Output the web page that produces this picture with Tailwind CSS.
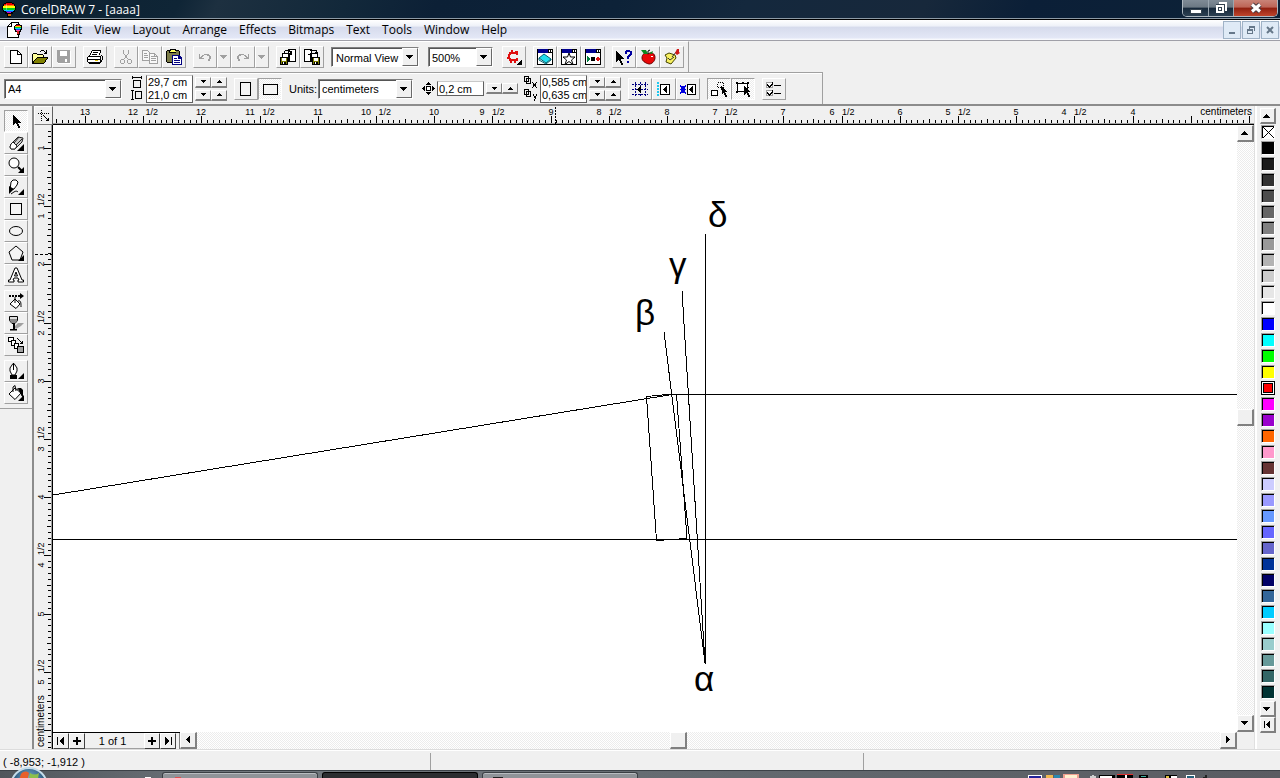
<!DOCTYPE html>
<html lang="en">

<head>
  <meta charset="UTF-8" />
  <title>CorelDRAW 7 - [aaaa]</title>
  <meta name="viewport" content="width=device-width, initial-scale=1.0" />
  <script src="https://cdn.jsdelivr.net/npm/@tailwindcss/browser@4"></script>
</head>

<body class="h-screen flex flex-col overflow-hidden bg-[#f0f0f0] text-black text-[11px] leading-3 font-['Liberation_Sans',sans-serif]">

  <!-- Title bar -->
  <header class="h-5 shrink-0 flex items-start justify-between pl-px pr-[2px] border-b border-black bg-[linear-gradient(115deg,#0c2131_0%,#0f2536_14%,#1d3040_17%,#12283a_27%,#0c2036_34%,#0d2238_48%,#14283d_58%,#17283b_72%,#0b1f37_80%,#0d2237_100%)] shadow-[inset_0_-1px_0_#8d9aa5]">
    <div class="flex items-center gap-1 h-[19px]">
      <svg class="w-4 h-4" viewBox="0 0 16 16" shape-rendering="crispEdges">
        <path d="M5 0h6v1h2v1h1v2h1v4h-1v2h-2v2h-2v3H6v-3H4v-2H2V8H1V4h1V2h1V1h2z" fill="#000" />
        <path d="M5 1h6v1h2v2H3V2h2z" fill="#e00" />
        <path d="M3 3h10v1H3z" fill="#f80" />
        <path d="M2 4h12v2H2z" fill="#ff0" />
        <path d="M2 6h12v2H2z" fill="#0c2" />
        <path d="M3 8h10v1H3z" fill="#0cf" />
        <path d="M5 9h7v1H5z" fill="#24f" />
        <path d="M6 10h4v1H6z" fill="#c0c" />
        <path d="M7 12h3v2H7z" fill="#c60" />
        <path d="M5 2h1v6H5z" fill="#fff" opacity=".35" />
      </svg>
      <h1 class="text-[12px] text-white font-['Open_Sans',sans-serif]">CorelDRAW 7 - [aaaa]</h1>
    </div>
    <div class="flex h-[17px] border border-t-0 border-[#aeb8c0] rounded-b-[5px] overflow-hidden">
      <button aria-label="Minimize" class="w-[26px] flex items-center justify-center border-r border-[#9aa6b0] bg-[linear-gradient(#7f8b96_0,#6c7984_45%,#16283a_50%,#2c4052_100%)]">
        <svg class="w-3 h-3" viewBox="0 0 12 12" shape-rendering="crispEdges"><path d="M0 7h12v5H0z" fill="#34424e" /><path d="M1 8h10v3H1z" fill="#fff" /></svg>
      </button>
      <button aria-label="Restore" class="w-[25px] flex items-center justify-center border-r border-[#9aa6b0] bg-[linear-gradient(#7f8b96_0,#6c7984_45%,#16283a_50%,#2c4052_100%)]">
        <svg class="w-3 h-3" viewBox="0 0 12 12" shape-rendering="crispEdges"><path d="M4 0h8v9H9V3H4z" fill="#fff" /><path d="M1 2h9v9H1z" fill="#34424e" /><path d="M1 3h8v8H1z" fill="#fff" /><path d="M3 5h4v4H3z" fill="#34424e" /><path d="M4 6h2v2H4z" fill="#fff" /></svg>
      </button>
      <button aria-label="Close" class="w-[43px] flex items-center justify-center bg-[linear-gradient(#c98478_0,#bd6456_45%,#8f1f10_50%,#c0452c_100%)]">
        <svg class="w-3 h-3" viewBox="0 0 12 12"><path d="M2 2.500l8 7M10 2.500l-8 7" stroke="#4a3a40" stroke-width="5" /><path d="M2 2.500l8 7M10 2.500l-8 7" stroke="#fff" stroke-width="3" /></svg>
      </button>
    </div>
  </header>

  <!-- Menu bar -->
  <nav class="h-[21px] shrink-0 flex items-center justify-between pl-1.5 pr-px border-b border-[#a0a0a8] bg-[linear-gradient(#fff_0,#eef1f8_30%,#d6dbec_36%,#e3e7f6_88%,#fdfdff_100%)]">
    <div class="flex items-center gap-3 text-[12px] font-['Open_Sans',sans-serif]">
      <svg class="w-4 h-4 -mr-1" viewBox="0 0 16 16" shape-rendering="crispEdges">
        <path d="M5 1h8v14H1V5z" fill="#fff" />
        <path d="M5 0h7v1H5zM4 1h1v1H4zM3 2h1v1H3zM2 3h1v1H2zM1 4h1v11H1zM1 15h12v1H1zM12 0h1v3h-1zM5 1h1v4H2V4h3zM12 13h1v2h-1z" fill="#000" />
        <path d="M10 2h4v1h2v5h-1v2h-1v3h-3v-3h-2V8H8V4h1V3h1z" fill="#000" />
        <path d="M10 3h4v1h-4z" fill="#e00" /><path d="M9 4h6v1H9z" fill="#fc0" /><path d="M9 5h6v1H9z" fill="#0c2" />
        <path d="M9 6h6v1H9z" fill="#0cf" /><path d="M10 7h4v1h-4z" fill="#24f" /><path d="M10 8h4v1h-4z" fill="#f4a" /><path d="M11 9h2v3h-2z" fill="#d22" />
      </svg>
      <a href="#">File</a>
      <a href="#">Edit</a>
      <a href="#">View</a>
      <a href="#">Layout</a>
      <a href="#">Arrange</a>
      <a href="#">Effects</a>
      <a href="#">Bitmaps</a>
      <a href="#">Text</a>
      <a href="#">Tools</a>
      <a href="#">Window</a>
      <a href="#">Help</a>
    </div>
    <div class="flex gap-px">
      <button aria-label="Minimize document" class="w-[18px] h-[18px] flex items-center justify-center border border-[#9fb2c6] bg-[#dfeaf6]">
        <svg class="w-2.5 h-2.5" viewBox="0 0 10 10" shape-rendering="crispEdges"><path d="M2 7h6v2H2z" fill="#66788a" /></svg>
      </button>
      <button aria-label="Restore document" class="w-[18px] h-[18px] flex items-center justify-center border border-[#9fb2c6] bg-[#dfeaf6]">
        <svg class="w-2.5 h-2.5" viewBox="0 0 10 10" shape-rendering="crispEdges"><path d="M3 1h6v5H8V3H4v1H3zM1 4h6v5H1zM2 6v2h4V6z" fill="#66788a" fill-rule="evenodd" /></svg>
      </button>
      <button aria-label="Close document" class="w-[18px] h-[18px] flex items-center justify-center border border-[#9fb2c6] bg-[#dfeaf6]">
        <svg class="w-2.5 h-2.5" viewBox="0 0 10 10"><path d="M2 2l6 6M8 2L2 8" stroke="#66788a" stroke-width="2" /></svg>
      </button>
    </div>
  </nav>

  <!-- Standard toolbar -->
  <div class="h-[31px] w-[689px] shrink-0 flex items-center gap-[7px] pl-1 border-t border-t-white border-r border-r-[#a0a0a0]">
    <div class="flex">
      <button aria-label="New" class="w-6 h-[22px] flex items-center justify-center border border-white border-r-[#a0a0a0] border-b-[#a0a0a0]">
        <svg class="w-4 h-4" viewBox="0 0 16 16" shape-rendering="crispEdges"><path d="M3 2h7v1h1v1h1v1h1v9H3z" fill="#fff" /><path d="M2 1h8v1H2zM2 2h1v12H2zM2 14h12v1H2zM13 5h1v9h-1zM9 2h1v3h3v1H9zM10 2h1v1h-1zM11 3h1v1h-1zM12 4h1v1h-1z" /></svg>
      </button>
      <button aria-label="Open" class="w-6 h-[22px] flex items-center justify-center border border-white border-r-[#a0a0a0] border-b-[#a0a0a0]">
        <svg class="w-4 h-4" viewBox="0 0 16 16" shape-rendering="crispEdges"><path d="M1 5h4v1h6v3H5l-4 5z" fill="#ffff9c" /><path d="M5 9h11l-4 5H1z" fill="#808000" /><path d="M1 4h4v1H1zM0 5h1v9H0zM5 5h6v1H5zM11 6h1v2h-1zM5 8h11v1H5zM4 9h1v1H4zM3 10h1v1H3zM2 11h1v1H2zM1 12h1v2H1zM0 14h12v1H0zM15 9h1v1h-1zM14 10h1v1h-1zM13 11h1v2h-1zM12 13h1v1h-1zM8 2h1v1H8zM9 1h3v1H9zM12 2h1v1h-1zM13 3h1v1h-1zM14 1h1v4h-3V4h2z" /></svg>
      </button>
      <button aria-label="Save" class="w-6 h-[22px] flex items-center justify-center border border-white border-r-[#a0a0a0] border-b-[#a0a0a0]">
        <svg class="w-4 h-4" viewBox="0 0 16 16" shape-rendering="crispEdges"><path d="M2 2h13v13H2z" fill="#fff" /><path d="M1 1h13v13H2v-1H1zM4 2v5h7V2zM9 10v3h2v-3z" fill="#a0a0a0" fill-rule="evenodd" /></svg>
      </button>
    </div>
    <button aria-label="Print" class="w-6 h-[22px] flex items-center justify-center border border-white border-r-[#a0a0a0] border-b-[#a0a0a0]">
      <svg class="w-4 h-4" viewBox="0 0 16 16" shape-rendering="crispEdges"><path d="M5 1h9l-3 6H3z" fill="#fff" /><path d="M1 8h13v6H1z" fill="#fff" /><path d="M5 1h9v1H5zM4 2h1v2H4zM13 2h1v2h-1zM3 4h1v2H3zM12 4h1v2h-1zM6 3h5v1H6zM5 5h5v1H5zM1 7h13v1H1zM0 8h1v5H0zM1 10h12v1H1zM13 8h1v5h-1zM14 6h1v1h-1zM15 7h1v4h-1zM14 11h1v2h-1zM1 13h13v1H1zM2 15h11v-1H2zM2 6h1v1H2z" /><path d="M8 11h3v1H8z" fill="#e0c000" /></svg>
    </button>
    <div class="flex">
      <button aria-label="Cut" class="w-6 h-[22px] flex items-center justify-center border border-white border-r-[#a0a0a0] border-b-[#a0a0a0]">
        <svg class="w-4 h-4" viewBox="0 0 16 16" fill="none" stroke="#a0a0a0" shape-rendering="crispEdges"><path d="M5.500 1v3l5 7M10.500 1v3l-5 7" /><circle cx="4.500" cy="12.500" r="2" /><circle cx="11.500" cy="12.500" r="2" /></svg>
      </button>
      <button aria-label="Copy" class="w-6 h-[22px] flex items-center justify-center border border-white border-r-[#a0a0a0] border-b-[#a0a0a0]">
        <svg class="w-4 h-4" viewBox="0 0 16 16" fill="#f8f8f8" stroke="#a0a0a0" shape-rendering="crispEdges"><path d="M.500 1.500h5l3 3v7h-8zM2 4.500h3M2 6.500h4M2 8.500h4" /><path d="M7.500 4.500h5l3 3v7h-8zM9 7.500h3M9 9.500h5M9 11.500h5M12.500 5v2.500h3" /></svg>
      </button>
      <button aria-label="Paste" class="w-6 h-[22px] flex items-center justify-center border border-white border-r-[#a0a0a0] border-b-[#a0a0a0]">
        <svg class="w-4 h-4" viewBox="0 0 16 16" shape-rendering="crispEdges"><path d="M1 1h12v1h1v12H1v-1H0V2h1z" /><path d="M1 2h12v11H1z" fill="#7c7c48" /><path d="M4 0h6v4H3V2h1z" /><path d="M5 1h4v1h1v1H4V2h1z" fill="#ffff60" /><path d="M6 6h7l3 3v7H6z" fill="#000080" /><path d="M7 7h5v3h3v5H7z" fill="#fff" /><path d="M8 9h3v1H8zM8 11h6v1H8zM8 13h6v1H8z" fill="#000080" /></svg>
      </button>
    </div>
    <div class="flex">
      <button aria-label="Undo" class="w-6 h-[22px] flex items-center justify-center border border-white border-r-[#a0a0a0] border-b-[#a0a0a0]">
        <svg class="w-4 h-4" viewBox="0 0 16 16" shape-rendering="crispEdges"><path d="M2 5v5h5V9H5V8h1V7h1V6h3v1h2v3h-1v2h2v-2h1V7h-1V6h-1V5H7v1H5v1H4v1H3V5z" fill="#a0a0a0" /></svg>
      </button>
      <button aria-label="Undo list" class="w-[14px] h-[22px] flex items-center justify-center border border-white border-r-[#a0a0a0] border-b-[#a0a0a0]">
        <svg class="w-2 h-1" viewBox="0 0 8 4" shape-rendering="crispEdges"><path d="M0 0h7v1H6v1H5v1H4v1H3V3H2V2H1V1H0z" fill="#a0a0a0" /></svg>
      </button>
      <button aria-label="Redo" class="w-6 h-[22px] flex items-center justify-center border border-white border-r-[#a0a0a0] border-b-[#a0a0a0]">
        <svg class="w-4 h-4" viewBox="0 0 16 16" shape-rendering="crispEdges"><path d="M14 5v5H9V9h2V8h-1V7H9V6H6v1H4v3h1v2H3v-2H2V7h1V6h1V5h5v1h2v1h1v1h1V5z" fill="#a0a0a0" /></svg>
      </button>
      <button aria-label="Redo list" class="w-[14px] h-[22px] flex items-center justify-center border border-white border-r-[#a0a0a0] border-b-[#a0a0a0]">
        <svg class="w-2 h-1" viewBox="0 0 8 4" shape-rendering="crispEdges"><path d="M0 0h7v1H6v1H5v1H4v1H3V3H2V2H1V1H0z" fill="#a0a0a0" /></svg>
      </button>
    </div>
    <div class="flex">
      <button aria-label="Import" class="w-6 h-[22px] flex items-center justify-center border border-white border-r-[#a0a0a0] border-b-[#a0a0a0]">
        <svg class="w-4 h-4" viewBox="0 0 16 16" shape-rendering="crispEdges"><path d="M8.500.500h7v12h-7zM2.500 4.500h7v7h-7z" fill="#fff" stroke="#000" /><path d="M5 1h5v1H5zM4 2h1v3H4zM9 2h3v1H9zM10 3h2v3h-2zM8 5h2v1H8z" /><path d="M0 8h8v8H0z" /><path d="M1 9h6v6H1z" fill="#808000" /><path d="M2 9h4v3H2z" fill="#fff" /><path d="M2 13h4v3H2z" /><path d="M3 13h1v2H3z" fill="#fff" /></svg>
      </button>
      <button aria-label="Export" class="w-6 h-[22px] flex items-center justify-center border border-white border-r-[#a0a0a0] border-b-[#a0a0a0]">
        <svg class="w-4 h-4" viewBox="0 0 16 16" shape-rendering="crispEdges"><path d="M.500.500h7v12h-7zM6.500 4.500h7v7h-7z" fill="#fff" stroke="#000" /><path d="M6 1h7v1H6zM12 2h1v3h-1zM11 3h3v1h-3zM4 5h3v1H4z" /><path d="M8 8h8v8H8z" /><path d="M9 9h6v6H9z" fill="#808000" /><path d="M10 9h4v3h-4z" fill="#fff" /><path d="M10 13h4v3h-4z" /><path d="M11 13h1v2h-1z" fill="#fff" /></svg>
      </button>
    </div>
    <div class="flex w-[88px] h-5 mr-[2px] border border-[#808080] border-r-white border-b-white bg-white">
      <select aria-label="View quality" class="appearance-none min-w-0 grow pl-[3px] bg-white border-t border-l border-[#555]">
        <option>Normal View</option>
      </select>
      <span class="w-4 shrink-0 flex items-center justify-center border border-white border-r-[#696969] border-b-[#696969] bg-[#f0f0f0]">
        <svg class="w-2 h-1" viewBox="0 0 8 4" shape-rendering="crispEdges"><path d="M0 0h7v1H6v1H5v1H4v1H3V3H2V2H1V1H0z" /></svg>
      </span>
    </div>
    <div class="flex w-[65px] h-5 mr-[2px] border border-[#808080] border-r-white border-b-white bg-white">
      <select aria-label="Zoom level" class="appearance-none min-w-0 grow pl-[2px] bg-white border-t border-l border-[#555]">
        <option>500%</option>
      </select>
      <span class="w-4 shrink-0 flex items-center justify-center border border-white border-r-[#696969] border-b-[#696969] bg-[#f0f0f0]">
        <svg class="w-2 h-1" viewBox="0 0 8 4" shape-rendering="crispEdges"><path d="M0 0h7v1H6v1H5v1H4v1H3V3H2V2H1V1H0z" /></svg>
      </span>
    </div>
    <button aria-label="Application launcher" class="w-6 h-[22px] flex items-center justify-center border border-white border-r-[#a0a0a0] border-b-[#a0a0a0]">
      <svg class="w-4 h-4" viewBox="0 0 16 16" shape-rendering="crispEdges"><path d="M5 1h2v2h2V2h3v4h-2V5H5v1H4v3h1v1h5V9h2v3h-2v2H8v-2H6v2H4v-2H3v-2H1V8h1V5h1V3h2z" fill="#e01010" /><path d="M15 11h1v5h-5v-1h1v-1h1v-1h1v-1h1z" /></svg>
    </button>
    <div class="flex">
      <button aria-label="Scrapbook" class="w-6 h-[22px] flex items-center justify-center border border-white border-r-[#a0a0a0] border-b-[#a0a0a0]">
        <svg class="w-4 h-4" viewBox="0 0 16 16"><path d="M.500.500h15v15h-15z" fill="#fff" stroke="#000" shape-rendering="crispEdges" /><path d="M1 0h10v4H1z" fill="#000090" shape-rendering="crispEdges" /><path d="M11 0h5v4h-5z" /><path d="M12 1h1v2h-1zM14 1h1v2h-1z" fill="#fff" /><path d="M2 9l5-4 7 5-5 4z" fill="#20e0f0" stroke="#006070" /><path d="M2 9v2l7 4 5-4v-1" fill="none" stroke="#006070" /></svg>
      </button>
      <button aria-label="Symbols" class="w-6 h-[22px] flex items-center justify-center border border-white border-r-[#a0a0a0] border-b-[#a0a0a0]">
        <svg class="w-4 h-4" viewBox="0 0 16 16"><path d="M.500.500h15v15h-15z" fill="#fff" stroke="#000" shape-rendering="crispEdges" /><path d="M1 0h10v4H1z" fill="#000090" shape-rendering="crispEdges" /><path d="M11 0h5v4h-5z" /><path d="M12 1h1v2h-1zM14 1h1v2h-1z" fill="#fff" /><path d="M8 4l1.500 4H14l-3.500 3 1.500 4.500-4-3-4 3L5.500 11 2 8h4.500z" fill="#fff" stroke="#000" /></svg>
      </button>
      <button aria-label="Script and preset manager" class="w-6 h-[22px] flex items-center justify-center border border-white border-r-[#a0a0a0] border-b-[#a0a0a0]">
        <svg class="w-4 h-4" viewBox="0 0 16 16" shape-rendering="crispEdges"><path d="M.500.500h15v15h-15z" fill="#fff" stroke="#000" /><path d="M1 0h10v4H1z" fill="#000090" /><path d="M11 0h5v4h-5z" /><path d="M12 1h1v2h-1zM14 1h1v2h-1z" fill="#fff" /><path d="M2 7h1v1h1v1h1v2H4v1H3v1H2z" fill="#008040" /><path d="M6 8h4v4H6z" /><path d="M12 8h2v1h1v2h-1v1h-2v-1h-1V9h1z" fill="#e01010" /></svg>
      </button>
    </div>
    <div class="flex">
      <button aria-label="What's this?" class="w-6 h-[22px] flex items-center justify-center border border-white border-r-[#a0a0a0] border-b-[#a0a0a0]">
        <svg class="w-4 h-4" viewBox="0 0 16 16" shape-rendering="crispEdges"><path d="M0 2h1v1h1v1h1v1h1v1h1v1h1v1h1v1h1v1H5v2h1v2h1v2H5v-2H4v-2H3v-1H2v1H1v1H0z" /><path d="M9 2h1V1h4v1h2v4h-1v1h-1v1h-1v2h-2V7h1V6h1V5h1V3h-3v2H9zM11 12h2v2h-2z" fill="#0000a0" /></svg>
      </button>
      <button aria-label="Corel tutor" class="w-6 h-[22px] flex items-center justify-center border border-white border-r-[#a0a0a0] border-b-[#a0a0a0]">
        <svg class="w-4 h-4" viewBox="0 0 16 16"><path d="M8 5c3-2 7-1 7 3.500S11 15 9.500 15 2 13 2 9s3-6 6-4z" fill="#e80808" stroke="#600" /><path d="M8 5V2l2-1" fill="none" stroke="#000" /><path d="M1 1l5 0 2 4-4 0z" fill="#0a8a20" /><path d="M9 4l4-2-1 3z" fill="#0a8a20" /><path d="M11 7h2v1h-2z" fill="#fff" /></svg>
      </button>
      <button aria-label="Notes" class="w-6 h-[22px] flex items-center justify-center border border-white border-r-[#a0a0a0] border-b-[#a0a0a0]">
        <svg class="w-4 h-4" viewBox="0 0 16 16"><path d="M1 6l4-2 6 2 1 3-5 6-5-2 1-4z" fill="#f8f060" stroke="#444400" /><path d="M4 9l2 2 4-3" fill="none" stroke="#333" /><path d="M8 8l5-6" stroke="#333" /><path d="M13 0h2v3l1 1-3 2-2-2z" fill="#d01818" /></svg>
      </button>
    </div>
  </div>

  <!-- Property bar -->
  <div class="h-8 w-[823px] shrink-0 flex items-center pl-1 border-t border-t-[#a0a0a0] border-r border-r-[#a0a0a0] shadow-[inset_0_1px_0_#fff]">
    <div class="flex w-[118px] h-5 border border-[#808080] border-r-white border-b-white bg-white">
      <select aria-label="Paper type" class="appearance-none min-w-0 grow pl-[2px] bg-white border-t border-l border-[#555]">
        <option>A4</option>
      </select>
      <span class="w-4 shrink-0 flex items-center justify-center border border-white border-r-[#696969] border-b-[#696969] bg-[#f0f0f0]">
        <svg class="w-2 h-1" viewBox="0 0 8 4" shape-rendering="crispEdges"><path d="M0 0h7v1H6v1H5v1H4v1H3V3H2V2H1V1H0z" /></svg>
      </span>
    </div>
    <div class="flex flex-col gap-px ml-[9px] mr-[3px]">
      <svg class="w-3 h-3" viewBox="0 0 12 12" shape-rendering="crispEdges" fill="none" stroke="#000"><path d="M1 1.500h10M1.500 0v3M10.500 0v3M2.500 4.500h7v7h-7z" /></svg>
      <svg class="w-3 h-3" viewBox="0 0 12 12" shape-rendering="crispEdges" fill="none" stroke="#000"><path d="M1.500 1v10M0 1.500h3M0 10.500h3M4.500 2.500h6v7h-6z" /></svg>
    </div>
    <div class="flex flex-col w-[47px] border border-[#606060] border-t-[#c8c8c8] bg-white">
      <input aria-label="Paper width" value="29,7 cm" class="w-full h-[13px] pl-px" />
      <input aria-label="Paper height" value="21,0 cm" class="w-full h-[13px] pl-px" />
    </div>
    <div class="flex flex-col gap-[2px] ml-[2px] mr-[7px]" data-spin="2"></div>
    <div class="flex">
      <button aria-label="Portrait" class="w-6 h-[22px] flex items-center justify-center border border-white border-r-[#a0a0a0] border-b-[#a0a0a0]">
        <svg class="w-4 h-4" viewBox="0 0 16 16" shape-rendering="crispEdges"><path d="M2 1h11v14H2z" /><path d="M3 2h9v12H3z" fill="#f4f4f4" /></svg>
      </button>
      <button aria-label="Landscape" aria-pressed="true" class="w-6 h-[22px] flex items-center justify-center border border-[#a0a0a0] border-r-white border-b-white bg-[repeating-conic-gradient(#fff_0_25%,#ececec_0_50%)] bg-[length:2px_2px]">
        <svg class="w-4 h-4" viewBox="0 0 16 16" shape-rendering="crispEdges"><path d="M1 3h15v11H1z" /><path d="M2 4h13v9H2z" fill="#f4f4f4" /></svg>
      </button>
    </div>
    <label for="units" class="w-9 pl-[7px]">Units:</label>
    <div class="flex w-[95px] h-5 border border-[#808080] border-r-white border-b-white bg-white">
      <select id="units" class="appearance-none min-w-0 grow pl-[2px] bg-white border-t border-l border-[#555]">
        <option>centimeters</option>
      </select>
      <span class="w-4 shrink-0 flex items-center justify-center border border-white border-r-[#696969] border-b-[#696969] bg-[#f0f0f0]">
        <svg class="w-2 h-1" viewBox="0 0 8 4" shape-rendering="crispEdges"><path d="M0 0h7v1H6v1H5v1H4v1H3V3H2V2H1V1H0z" /></svg>
      </span>
    </div>
    <svg class="w-[13px] h-[13px] ml-[9px] mr-[2px]" viewBox="0 0 13 13" shape-rendering="crispEdges"><path d="M6 0h1v1h1v1h1v1H4V2h1V1h1zM6 13h1v-1h1v-1h1v-1H4v1h1v1h1zM0 6h1V5h1V4h1v5H2V8H1V7H0zM13 6h-1V5h-1V4h-1v5h1V8h1V7h1z" /><path d="M4.500 4.500h4v4h-4z" fill="#fff" stroke="#000" /></svg>
    <input aria-label="Nudge offset" value="0,2 cm" class="w-[47px] h-[15px] pl-px border border-[#606060] border-t-[#c8c8c8] bg-white" />
    <div class="flex flex-col ml-[2px] mr-[6px]" data-spin="1"></div>
    <div class="flex flex-col gap-px mr-[2px]">
      <svg class="w-[14px] h-3" viewBox="0 0 14 12" shape-rendering="crispEdges" fill="none" stroke="#000"><path d="M.500.500h4v5h-4zM2.500 2.500h4v5h-4z" /><path d="M8 6l5 6M13 6l-5 6" /></svg>
      <svg class="w-[14px] h-3" viewBox="0 0 14 12" shape-rendering="crispEdges" fill="none" stroke="#000"><path d="M.500.500h4v5h-4zM2.500 2.500h4v5h-4z" /><path d="M9 5l2 4M13 5l-3 7H8" /></svg>
    </div>
    <div class="flex flex-col w-[47px] border border-[#606060] border-t-[#c8c8c8] bg-white">
      <input aria-label="Duplicate distance x" value="0,585 cm" class="w-full h-[13px] pl-px" />
      <input aria-label="Duplicate distance y" value="0,635 cm" class="w-full h-[13px] pl-px" />
    </div>
    <div class="flex flex-col gap-[2px] ml-[2px] mr-[7px]" data-spin="2"></div>
    <div class="flex mr-[7px]">
      <button aria-label="Snap to grid" class="w-6 h-[22px] flex items-center justify-center border border-white border-r-[#a0a0a0] border-b-[#a0a0a0]">
        <svg class="w-4 h-4" viewBox="0 0 16 16" shape-rendering="crispEdges"><path d="M3.500 1v15M8.500 1v15M13.500 1v15M0 3.500h16M0 8.500h16M0 13.500h16" stroke="#000080" stroke-dasharray="2 1" /><path d="M9 5v7H8v-1H7v-1H6V9H5V8h1V7h1V6h1V5z" /></svg>
      </button>
      <button aria-label="Snap to guidelines" class="w-6 h-[22px] flex items-center justify-center border border-white border-r-[#a0a0a0] border-b-[#a0a0a0]">
        <svg class="w-4 h-4" viewBox="0 0 16 16" shape-rendering="crispEdges"><path d="M1 1h2v14H1z" fill="#20c8f0" /><path d="M1 3h2v1H1zM1 6h2v1H1zM1 9h2v1H1zM1 12h2v1H1z" fill="#f0f0f0" /><path d="M4 3h10v11H4z" /><path d="M5 4h8v9H5z" fill="#fff" /><path d="M11 5v7h-1v-1H9v-1H8V9H7V8h1V7h1V6h1V5z" /></svg>
      </button>
      <button aria-label="Snap to objects" class="w-6 h-[22px] flex items-center justify-center border border-white border-r-[#a0a0a0] border-b-[#a0a0a0]">
        <svg class="w-4 h-4" viewBox="0 0 16 16" shape-rendering="crispEdges"><path d="M1 5h4v7H1z" fill="#0000e0" /><path d="M0 4h1v2H0zM5 4h1v2H5zM0 11h1v2H0zM5 11h1v2H5zM0 8h6v1H0z" fill="#0000e0" /><path d="M7 3h9v11H7z" /><path d="M8 4h7v9H8z" fill="#fff" /><path d="M13 5v7h-1v-1h-1v-1h-1V9H9V8h1V7h1V6h1V5z" /></svg>
      </button>
    </div>
    <div class="flex mr-[7px]">
      <button aria-label="Draw complex objects" aria-pressed="true" class="w-6 h-[22px] flex items-center justify-center border border-[#a0a0a0] border-r-white border-b-white bg-[repeating-conic-gradient(#fff_0_25%,#ececec_0_50%)] bg-[length:2px_2px]">
        <svg class="w-4 h-4" viewBox="0 0 16 16" shape-rendering="crispEdges"><path d="M6.500 1.500h6v5h-6z" fill="none" stroke="#000" stroke-dasharray="1 1" /><path d="M.500 9.500h6v5h-6z" fill="#fff" stroke="#000" /><path d="M10 5h1v1h1v1h1v1h1v1h1v1h1v1h-2v1h1v2h1v2h-2v-2h-1v-2h-1v1h-1z" /></svg>
      </button>
      <button aria-label="Treat all as filled" aria-pressed="true" class="w-6 h-[22px] flex items-center justify-center border border-[#a0a0a0] border-r-white border-b-white bg-[repeating-conic-gradient(#fff_0_25%,#ececec_0_50%)] bg-[length:2px_2px]">
        <svg class="w-4 h-4" viewBox="0 0 16 16" shape-rendering="crispEdges"><path d="M2.500 2.500h10v8h-10z" fill="#fff" stroke="#000" /><path d="M1 1h2v2H1zM7 1h2v2H7zM12 1h2v2h-2zM1 10h2v2H1zM12 6h2v1h-2z" /><path d="M9 5h1v1h1v1h1v1h1v1h1v1h1v1h-2v1h1v2h1v2h-2v-2h-1v-2h-1v1h-1v1H9z" /></svg>
      </button>
    </div>
    <button aria-label="Options" class="w-6 h-[22px] flex items-center justify-center border border-white border-r-[#a0a0a0] border-b-[#a0a0a0]">
      <svg class="w-4 h-4" viewBox="0 0 16 16" shape-rendering="crispEdges"><path d="M.500 1.500h6v5h-6zM.500 9.500h6v5h-6z" fill="#fff" stroke="#a0a0a0" /><path d="M8 4h7v1H8zM8 12h7v1H8zM1 3h1v1h1v1h1V4h1V3h1V1h1v3H6v1H5v1H4v1H3V6H2V5H1zM1 11h1v1h1v1h1v-1h1v-1h1V9h1v3H6v1H5v1H4v1H3v-1H2v-1H1z" /></svg>
    </button>
  </div>

  <!-- Toolbox, document and palette -->
  <main class="grow min-h-0 flex border-t-2 border-[#8c8c8c]">
    <aside class="w-[34px] shrink-0 border-r-2 border-[#8c8c8c]">
      <div class="flex flex-col gap-1 pl-1 py-1 border-b border-[#a0a0a0]">
        <div class="flex flex-col">
          <button aria-label="Pick" aria-pressed="true" class="w-6 h-[22px] flex items-center justify-center border border-[#a0a0a0] border-r-white border-b-white bg-[repeating-conic-gradient(#fff_0_25%,#ececec_0_50%)] bg-[length:2px_2px]">
            <svg class="w-4 h-4" viewBox="0 0 16 16" shape-rendering="crispEdges"><path d="M5 2h1v1h1v1h1v1h1v1h1v1h1v1h1v1h1v1h-3v1h1v2h1v2h-2v-2H9v-2H8v-1H7v1H6v1H5z" /></svg>
          </button>
          <button aria-label="Shape" class="w-6 h-[22px] flex items-center justify-center border border-white border-r-[#a0a0a0] border-b-[#a0a0a0]">
            <svg class="w-4 h-4" viewBox="0 0 16 16"><path d="M3 9l7-7 5 1-1 4-7 7-4 0-1-2z" fill="#ccc" stroke="#222" /><path d="M5 7l4 4M11 2L6 8M14 4L8 10" stroke="#222" /><path d="M3 9l2-2 4 4-2 3-4 0-1-2z" fill="#fff" stroke="#222" /><path d="M16 9v7H9z" /></svg>
          </button>
          <button aria-label="Zoom" class="w-6 h-[22px] flex items-center justify-center border border-white border-r-[#a0a0a0] border-b-[#a0a0a0]">
            <svg class="w-4 h-4" viewBox="0 0 16 16"><circle cx="6" cy="6" r="5" fill="#fff" stroke="#000" /><path d="M10 10l4 4" stroke="#000" stroke-width="2" /><path d="M16 10v6h-6z" /></svg>
          </button>
          <button aria-label="Freehand" class="w-6 h-[22px] flex items-center justify-center border border-white border-r-[#a0a0a0] border-b-[#a0a0a0]">
            <svg class="w-4 h-4" viewBox="0 0 16 16"><path d="M3 3l2-2h3l2 2-1 3-3 4-4 1z" fill="#fff" stroke="#000" /><path d="M1 7l5 3-5 5z" /><path d="M3 15c3-2 5-4 7-2" fill="none" stroke="#000" /><path d="M16 10v6h-6z" /></svg>
          </button>
          <button aria-label="Rectangle" class="w-6 h-[22px] flex items-center justify-center border border-white border-r-[#a0a0a0] border-b-[#a0a0a0]">
            <svg class="w-4 h-4" viewBox="0 0 16 16" shape-rendering="crispEdges"><path d="M2.500 2.500h11v11h-11z" fill="#f4f4f4" stroke="#000" /></svg>
          </button>
          <button aria-label="Ellipse" class="w-6 h-[22px] flex items-center justify-center border border-white border-r-[#a0a0a0] border-b-[#a0a0a0]">
            <svg class="w-4 h-4" viewBox="0 0 16 16"><ellipse cx="8" cy="8" rx="6.500" ry="4.500" fill="#f4f4f4" stroke="#000" /></svg>
          </button>
          <button aria-label="Polygon" class="w-6 h-[22px] flex items-center justify-center border border-white border-r-[#a0a0a0] border-b-[#a0a0a0]">
            <svg class="w-4 h-4" viewBox="0 0 16 16"><path d="M8 1l7 6-3 8H4L1 7z" fill="#f4f4f4" stroke="#000" /><path d="M16 10v6h-6z" /></svg>
          </button>
          <button aria-label="Text" class="w-6 h-[22px] flex items-center justify-center border border-white border-r-[#a0a0a0] border-b-[#a0a0a0]">
            <svg class="w-4 h-4" viewBox="0 0 16 16"><path d="M7 1h2l5 12h1.500v2H10v-2h1l-1-2H6l-1 2h1v2H.500v-2H2zM8 5L6.500 9h3z" fill="#fff" stroke="#000" fill-rule="evenodd" /></svg>
          </button>
        </div>
        <div class="flex flex-col">
          <button aria-label="Interactive fill" class="w-6 h-[22px] flex items-center justify-center border border-white border-r-[#a0a0a0] border-b-[#a0a0a0]">
            <svg class="w-4 h-4" viewBox="0 0 16 16"><path d="M1 2h2v2H1zM4 2h2v2H4zM7 2h2v2H7zM10 2h2v2h-2zM12 0l4 3-4 3z" /><path d="M2 11l5-5 5 5-4 4.500z" fill="#fff" stroke="#000" /><path d="M7 4v6M10 8c3-1 3 2 3 6" fill="none" stroke="#000" stroke-width="1" /></svg>
          </button>
          <button aria-label="Interactive transparency" class="w-6 h-[22px] flex items-center justify-center border border-white border-r-[#a0a0a0] border-b-[#a0a0a0]">
            <svg class="w-4 h-4" viewBox="0 0 16 16"><path d="M6 12l4-4h6l-3 3-5 3z" fill="#a0a0a0" /><path d="M1.500 1.500h8v4L7 8.500H4L1.500 5.500z" fill="#ddd" stroke="#000" /><path d="M2 4h7v2L7 8H4L2 6z" fill="#888" /><path d="M5 8h2v6h2v1.500H2V14h3z" /></svg>
          </button>
          <button aria-label="Interactive blend" class="w-6 h-[22px] flex items-center justify-center border border-white border-r-[#a0a0a0] border-b-[#a0a0a0]">
            <svg class="w-4 h-4" viewBox="0 0 16 16" shape-rendering="crispEdges" stroke="#000" fill="#fff"><path d="M.500.500h5v4h-5z" /><path d="M3.500 3.500h4v5h-4z" /><path d="M6.500 6.500h4v5h-4z" /><path d="M9.500 9.500h6v6h-6z" fill="#a0a0a0" /><path d="M9 1l5 5" /><path d="M15 3v4h-4z" fill="#000" stroke="none" /></svg>
          </button>
        </div>
        <div class="flex flex-col">
          <button aria-label="Outline" class="w-6 h-[22px] flex items-center justify-center border border-white border-r-[#a0a0a0] border-b-[#a0a0a0]">
            <svg class="w-4 h-4" viewBox="0 0 16 16"><path d="M5 .500L2 5v3l2 4h3l2-4V5L6 .500z" fill="#fff" stroke="#000" /><path d="M5 1h1v6H5zM2 12h7v4H2z" /><path d="M16 10v6h-6z" /></svg>
          </button>
          <button aria-label="Fill" class="w-6 h-[22px] flex items-center justify-center border border-white border-r-[#a0a0a0] border-b-[#a0a0a0]">
            <svg class="w-4 h-4" viewBox="0 0 16 16"><path d="M1 9l6-6 6 5-6 6.500z" fill="#fff" stroke="#000" /><path d="M5 7V2l2-1.500L8 6M9 4c4 0 5 2 5 7" fill="none" stroke="#000" /><path d="M10 3h3l2 2v8l-3-5z" /><path d="M16 10v6h-6z" /></svg>
          </button>
        </div>
      </div>
    </aside>

    <section class="grow min-w-0 flex flex-col">
      <!-- Horizontal ruler -->
      <div class="h-[19px] shrink-0 flex">
        <button aria-label="Ruler origin" class="w-[19px] h-[19px] shrink-0 flex items-center justify-center border border-white border-r-[#606060] border-b-[#808080]">
          <svg class="w-3 h-3" viewBox="0 0 12 12" shape-rendering="crispEdges"><path d="M3.500 0v12M0 3.500h12" stroke="#000" stroke-dasharray="1 1" /><path d="M5 5l5 5" stroke="#000" /><path d="M11 7v4H7z" /></svg>
        </button>
        <svg id="rulerX" class="grow min-w-0 h-[19px] border-b border-black shadow-[inset_0_-1px_0_#a0a0a0]" shape-rendering="crispEdges"></svg>
      </div>

      <div class="grow min-h-0 flex">
        <svg id="rulerY" class="w-[19px] h-full shrink-0 border-r border-black shadow-[inset_-1px_0_0_#a0a0a0]" shape-rendering="crispEdges"></svg>

        <div class="grow min-w-0 flex flex-col">
          <div class="grow min-h-0 flex">
            <!-- Drawing -->
            <svg class="grow min-w-0 h-full bg-white" stroke="#000" fill="none">
              <g shape-rendering="crispEdges">
                <path d="M0 370L619 269.500H3000" />
                <path d="M0 414.500H3000" />
                <path d="M652.500 109V539" />
                <path d="M629 166L652 538" />
                <path d="M611 207L652 538" />
                <path d="M619 269L593.500 271.500L603.500 415.500H611M623.500 269L634 413.500H626" />
              </g>
              <g fill="#000" stroke="none" font-size="35">
                <text x="655" y="102">δ</text>
                <text x="616" y="152">γ</text>
                <text x="582" y="200">β</text>
                <text x="641" y="566">α</text>
              </g>
            </svg>
            <!-- Vertical scroll bar -->
            <div class="w-[17px] shrink-0 flex flex-col bg-[repeating-conic-gradient(#fff_0_25%,#ececec_0_50%)] bg-[length:2px_2px]">
              <button aria-label="Scroll up" class="h-[17px] shrink-0 flex items-center justify-center border border-white border-r-2 border-b-2 border-r-[#808080] border-b-[#808080] bg-[#f0f0f0]">
                <svg class="w-2 h-1" viewBox="0 0 8 4" shape-rendering="crispEdges"><path d="M3 0h1v1h1v1h1v1h1v1H0V3h1V2h1V1h1z" /></svg>
              </button>
              <div class="grow-[267] basis-0"></div>
              <div class="h-[17px] shrink-0 border border-white border-r-2 border-b-2 border-r-[#808080] border-b-[#808080] bg-[#f0f0f0]"></div>
              <div class="grow-[290] basis-0"></div>
              <button aria-label="Scroll down" class="h-[17px] shrink-0 flex items-center justify-center border border-white border-r-2 border-b-2 border-r-[#808080] border-b-[#808080] bg-[#f0f0f0]">
                <svg class="w-2 h-1" viewBox="0 0 8 4" shape-rendering="crispEdges"><path d="M0 0h7v1H6v1H5v1H4v1H3V3H2V2H1V1H0z" /></svg>
              </button>
            </div>
          </div>

          <!-- Page navigator and horizontal scroll bar -->
          <div class="h-[17px] shrink-0 flex pr-[17px]">
            <div class="flex w-[127px] shrink-0 border-t border-black">
              <button aria-label="First page" class="w-4 flex items-center justify-center border border-white border-r-[#404040] border-b-[#404040]">
                <svg class="w-2.5 h-2.5" viewBox="0 0 10 10" shape-rendering="crispEdges"><path d="M1 1h1v8H1zM8 1v8H7V8H6V7H5V6H4V4h1V3h1V2h1V1z" /></svg>
              </button>
              <button aria-label="Add page before" class="w-4 flex items-center justify-center border border-white border-r-[#404040] border-b-[#404040]">
                <svg class="w-2.5 h-2.5" viewBox="0 0 10 10" shape-rendering="crispEdges"><path d="M4 1h2v3h3v2H6v3H4V6H1V4h3z" /></svg>
              </button>
              <span class="grow flex items-center justify-center pr-1 border-b border-[#a0a0a0]">1 of 1</span>
              <button aria-label="Add page after" class="w-4 flex items-center justify-center border border-white border-r-[#404040] border-b-[#404040]">
                <svg class="w-2.5 h-2.5" viewBox="0 0 10 10" shape-rendering="crispEdges"><path d="M4 1h2v3h3v2H6v3H4V6H1V4h3z" /></svg>
              </button>
              <button aria-label="Last page" class="w-4 flex items-center justify-center border border-white border-r-[#404040] border-b-[#404040]">
                <svg class="w-2.5 h-2.5" viewBox="0 0 10 10" shape-rendering="crispEdges"><path d="M8 1h1v8H8zM2 1v8h1V8h1V7h1V6h1V4H5V3H4V2H3V1z" /></svg>
              </button>
              <span class="w-1 border-r border-[#808080]"></span>
            </div>
            <div class="grow flex bg-[repeating-conic-gradient(#fff_0_25%,#ececec_0_50%)] bg-[length:2px_2px]">
              <button aria-label="Scroll left" class="w-[17px] shrink-0 flex items-center justify-center border border-white border-r-2 border-b-2 border-r-[#808080] border-b-[#808080] bg-[#f0f0f0]">
                <svg class="w-1 h-2" viewBox="0 0 4 8" shape-rendering="crispEdges"><path d="M4 0v7H3V6H2V5H1V4H0V3h1V2h1V1h1V0z" /></svg>
              </button>
              <div class="grow-[473] basis-0"></div>
              <div class="w-[17px] shrink-0 border border-white border-r-2 border-b-2 border-r-[#808080] border-b-[#808080] bg-[#f0f0f0]"></div>
              <div class="grow-[533] basis-0"></div>
              <button aria-label="Scroll right" class="w-[17px] shrink-0 flex items-center justify-center border border-white border-r-2 border-b-2 border-r-[#808080] border-b-[#808080] bg-[#f0f0f0]">
                <svg class="w-1 h-2" viewBox="0 0 4 8" shape-rendering="crispEdges"><path d="M0 0v7h1V6h1V5h1V4h1V3H3V2H2V1H1V0z" /></svg>
              </button>
            </div>
          </div>
        </div>
      </div>
    </section>

    <!-- Colour palette -->
    <aside class="w-[26px] shrink-0 flex flex-col items-center pt-[2px] border-l border-[#e0e0e0] shadow-[inset_2px_0_0_#fff]">
      <button aria-label="Palette up" class="w-4 h-4 mb-px flex items-center justify-center border border-white border-r-2 border-b-2 border-r-[#808080] border-b-[#808080]">
        <svg class="w-2 h-1" viewBox="0 0 8 4" shape-rendering="crispEdges"><path d="M3 0h1v1h1v1h1v1h1v1H0V3h1V2h1V1h1z" /></svg>
      </button>
      <div id="palette" class="flex flex-col items-center"></div>
      <button aria-label="Palette down" class="w-4 h-4 flex items-center justify-center border border-white border-r-2 border-b-2 border-r-[#808080] border-b-[#808080]">
        <svg class="w-2 h-1" viewBox="0 0 8 4" shape-rendering="crispEdges"><path d="M0 0h7v1H6v1H5v1H4v1H3V3H2V2H1V1H0z" /></svg>
      </button>
      <button aria-label="Palette expand" class="w-4 h-4 flex items-center justify-center border border-white border-r-2 border-b-2 border-r-[#808080] border-b-[#808080]">
        <svg class="w-2 h-2" viewBox="0 0 8 8" shape-rendering="crispEdges"><path d="M1 0h1v7H1zM7 0v7H6V6H5V5H4V4H3V3h1V2h1V1h1V0z" /></svg>
      </button>
    </aside>
  </main>

  <!-- Status bar -->
  <footer class="h-[21px] shrink-0 grid grid-cols-[431px_433px_1fr] pt-[3px] border-t border-[#dcdcdc] shadow-[inset_0_1px_0_#fff]">
    <div class="flex items-center pl-[3px] pt-px border-r border-[#a0a0a0]">( -8,953; -1,912 )</div>
    <div class="border-r border-[#a0a0a0]"></div>
    <div></div>
  </footer>

  <!-- Windows taskbar -->
  <div class="relative h-2 shrink-0 flex items-end gap-1 pl-[162px] border-t border-[#3c4248] bg-[linear-gradient(90deg,#50565c,#72787e_20%,#62686e_60%,#5a5c62)]">
    <button aria-label="Start" class="absolute left-[10px] -top-1 w-[38px] h-[38px] rounded-full border-2 border-[#c4dcea] bg-[radial-gradient(circle_at_50%_30%,#7ab0d0,#1d4a70_60%)]">
      <svg class="w-full h-full" viewBox="0 0 34 34"><path d="M9 5c3-3 5-3 8-1l-2 10c-3-2-6-2-9 0z" fill="#e8602c" /><path d="M18 4c3 2 6 2 9 0l-2 10c-3 2-6 1-9 0z" fill="#8cc04c" /></svg>
    </button>
    <span class="absolute left-[145px] top-1.5 w-1.5 border-x-2 border-b border-white"></span>
    <button aria-label="Task 1" class="w-[156px] h-1.5 pl-3 rounded-t-[3px] border border-b-0 border-[#3a3f44] bg-[#8f9398] shadow-[inset_0_1px_0_#b8bcc0]"><span class="block w-1.5 h-0.5 mt-1 bg-[#e05050]"></span></button>
    <button aria-label="CorelDRAW 7" class="w-[156px] h-1.5 rounded-t-[3px] border border-b-0 border-black bg-[#2b2d30]"></button>
    <button aria-label="Task 3" class="w-[156px] h-1.5 pl-2.5 rounded-t-[3px] border border-b-0 border-[#3a3f44] bg-[#8f9398] shadow-[inset_0_1px_0_#b8bcc0]"><span class="block w-2.5 h-0.5 mt-1 bg-[#222]"></span></button>
    <svg class="w-[190px] h-1 ml-auto mr-[66px]" viewBox="0 0 190 4" shape-rendering="crispEdges">
      <path d="M4 1h14v3H4z" fill="#fff" /><path d="M5 2h12v2H5z" fill="#22229a" />
      <path d="M22 1h7v3h-7z" fill="#f0b850" /><path d="M30 1h6v3h-6z" fill="#2a88b0" />
      <path d="M39 0h16v4H39z" fill="#f0a090" /><path d="M41 1h12v3H41z" fill="#fff0d0" />
      <path d="M68 1h2v1h2v2h-6V2h2z" fill="#d0d0d0" />
      <path d="M75 1h16v3H75z" fill="#000" /><path d="M76 2h12v2H76z" fill="#fff" />
      <path d="M93 0h16v1H93z" fill="#e03030" /><path d="M93 1h16v3H93z" fill="#000" /><path d="M101 1h2v3h-2z" fill="#fff" />
      <path d="M115 1h9v3h-9z" fill="#000" /><path d="M117 2h5v1h-5z" fill="#40b0a0" />
      <path d="M141 1h12v3h-12z" fill="#000" /><path d="M142 2h3v2h-3z" fill="#e0c040" /><path d="M147 2h6v2h-6z" fill="#fff" />
      <path d="M162 1h9v3h-9z" fill="#fff" /><path d="M163 2h7v2h-7z" fill="#24607a" /><path d="M181 1h2v3h-4V3h2z" fill="#222" />
    </svg>
  </div>

  <script>
    const NS = 'http://www.w3.org/2000/svg';
    const UNIT = 116.4; // pixels per centimeter at 500%
    const rx = document.getElementById('rulerX');
    const ry = document.getElementById('rulerY');

    function el(parent, tag, attrs, text) {
      const node = document.createElementNS(NS, tag);
      for (const k in attrs) node.setAttribute(k, attrs[k]);
      if (text) node.textContent = text;
      parent.appendChild(node);
    }

    function label(v) {
      return v % 1 ? Math.floor(v) + '\u00a0\u00a0\u00a0' + '1/2' : String(v);
    }

    // Tick length by position: half unit, quarter, twentieth
    function tickLength(i) {
      return i % 10 === 0 ? 7 : i % 5 === 0 ? 4 : 3;
    }

    function drawRulers() {
      const w = rx.getBoundingClientRect().width;
      const h = ry.getBoundingClientRect().height;
      rx.replaceChildren();
      ry.replaceChildren();

      for (let i = -5; 32 + i * UNIT / 20 < w; i++) {
        const x = Math.round(32 + i * UNIT / 20);
        el(rx, 'rect', { x, y: 17 - tickLength(i), width: 1, height: tickLength(i) });
        if (i % 10 === 0 && x < w - 80)
          el(rx, 'text', { x, y: 9, 'font-size': 9, 'text-anchor': 'middle' }, label(13 - i / 20));
      }
      el(rx, 'text', { x: w - 2, y: 9, 'font-size': 10, 'text-anchor': 'end' }, 'centimeters');
      el(rx, 'path', { d: 'M502.500 1v17', stroke: '#000', 'stroke-dasharray': '2 1' });

      for (let i = -3; 23 + i * UNIT / 20 < h; i++) {
        const y = Math.round(23 + i * UNIT / 20);
        el(ry, 'rect', { x: 17 - tickLength(i), y, width: tickLength(i), height: 1 });
        if (i % 10 === 0 && y < h - 70)
          el(ry, 'text', { transform: `translate(10 ${y}) rotate(-90)`, 'font-size': 9, 'text-anchor': 'middle' }, label(1 + i / 20));
      }
      el(ry, 'text', { transform: `translate(10 ${h - 2}) rotate(-90)`, 'font-size': 10 }, 'centimeters');
      el(ry, 'path', { d: 'M1 129.500h17', stroke: '#000', 'stroke-dasharray': '3 2' });
    }

    // Spin buttons beside the numeric boxes
    const spin = `<div class="flex">
      <button aria-label="Decrease" class="w-4 h-[11px] flex items-center justify-center border border-white border-r-[#808080] border-b-2 border-b-[#808080]"><svg class="w-[5px] h-[3px]" viewBox="0 0 5 3" shape-rendering="crispEdges"><path d="M0 0h5v1H4v1H3v1H2V2H1V1H0z" /></svg></button>
      <button aria-label="Increase" class="w-4 h-[11px] flex items-center justify-center border border-white border-r-[#808080] border-b-2 border-b-[#808080]"><svg class="w-[5px] h-[3px]" viewBox="0 0 5 3" shape-rendering="crispEdges"><path d="M2 0h1v1h1v1h1v1H0V2h1V1h1z" /></svg></button>
    </div>`;
    document.querySelectorAll('[data-spin]').forEach(box => {
      box.innerHTML = spin.repeat(Number(box.dataset.spin));
    });

    const colors = ['none', '#000000', '#1a1a1a', '#333333', '#4d4d4d', '#666666', '#808080', '#999999', '#b3b3b3',
      '#cccccc', '#e6e6e6', '#ffffff', '#0000ff', '#00ffff', '#00ff00', '#ffff00', '#ff0000', '#ff00ff', '#9900cc',
      '#ff6600', '#ff99cc', '#663333', '#ccccff', '#9999ff', '#6699ff', '#6666ff', '#6666cc', '#003399', '#000066',
      '#336699', '#00ccff', '#99ffff', '#99cccc', '#669999', '#336666', '#003333'];
    const palette = document.getElementById('palette');
    colors.forEach(color => {
      const swatch = document.createElement('button');
      swatch.setAttribute('aria-label', color);
      swatch.className = color === '#ff0000'
        ? 'w-[14px] h-[14px] mb-[2px] border border-black shadow-[inset_0_0_0_1px_#fff,inset_0_0_0_2px_#000]'
        : 'w-[14px] h-[14px] mb-[2px] border border-[#a0a0a0] border-r-white border-b-white shadow-[inset_1px_1px_0_#000]';
      if (color === 'none') {
        swatch.classList.add('bg-white');
        swatch.innerHTML = '<svg class="w-3 h-3" viewBox="0 0 12 12" shape-rendering="crispEdges"><path d="M1 1l11 11M12 1L1 12" stroke="#000" /></svg>';
      } else {
        swatch.style.backgroundColor = color;
      }
      palette.appendChild(swatch);
    });

    const observer = new ResizeObserver(drawRulers);
    observer.observe(rx);
    observer.observe(ry);
  </script>
</body>

</html>
